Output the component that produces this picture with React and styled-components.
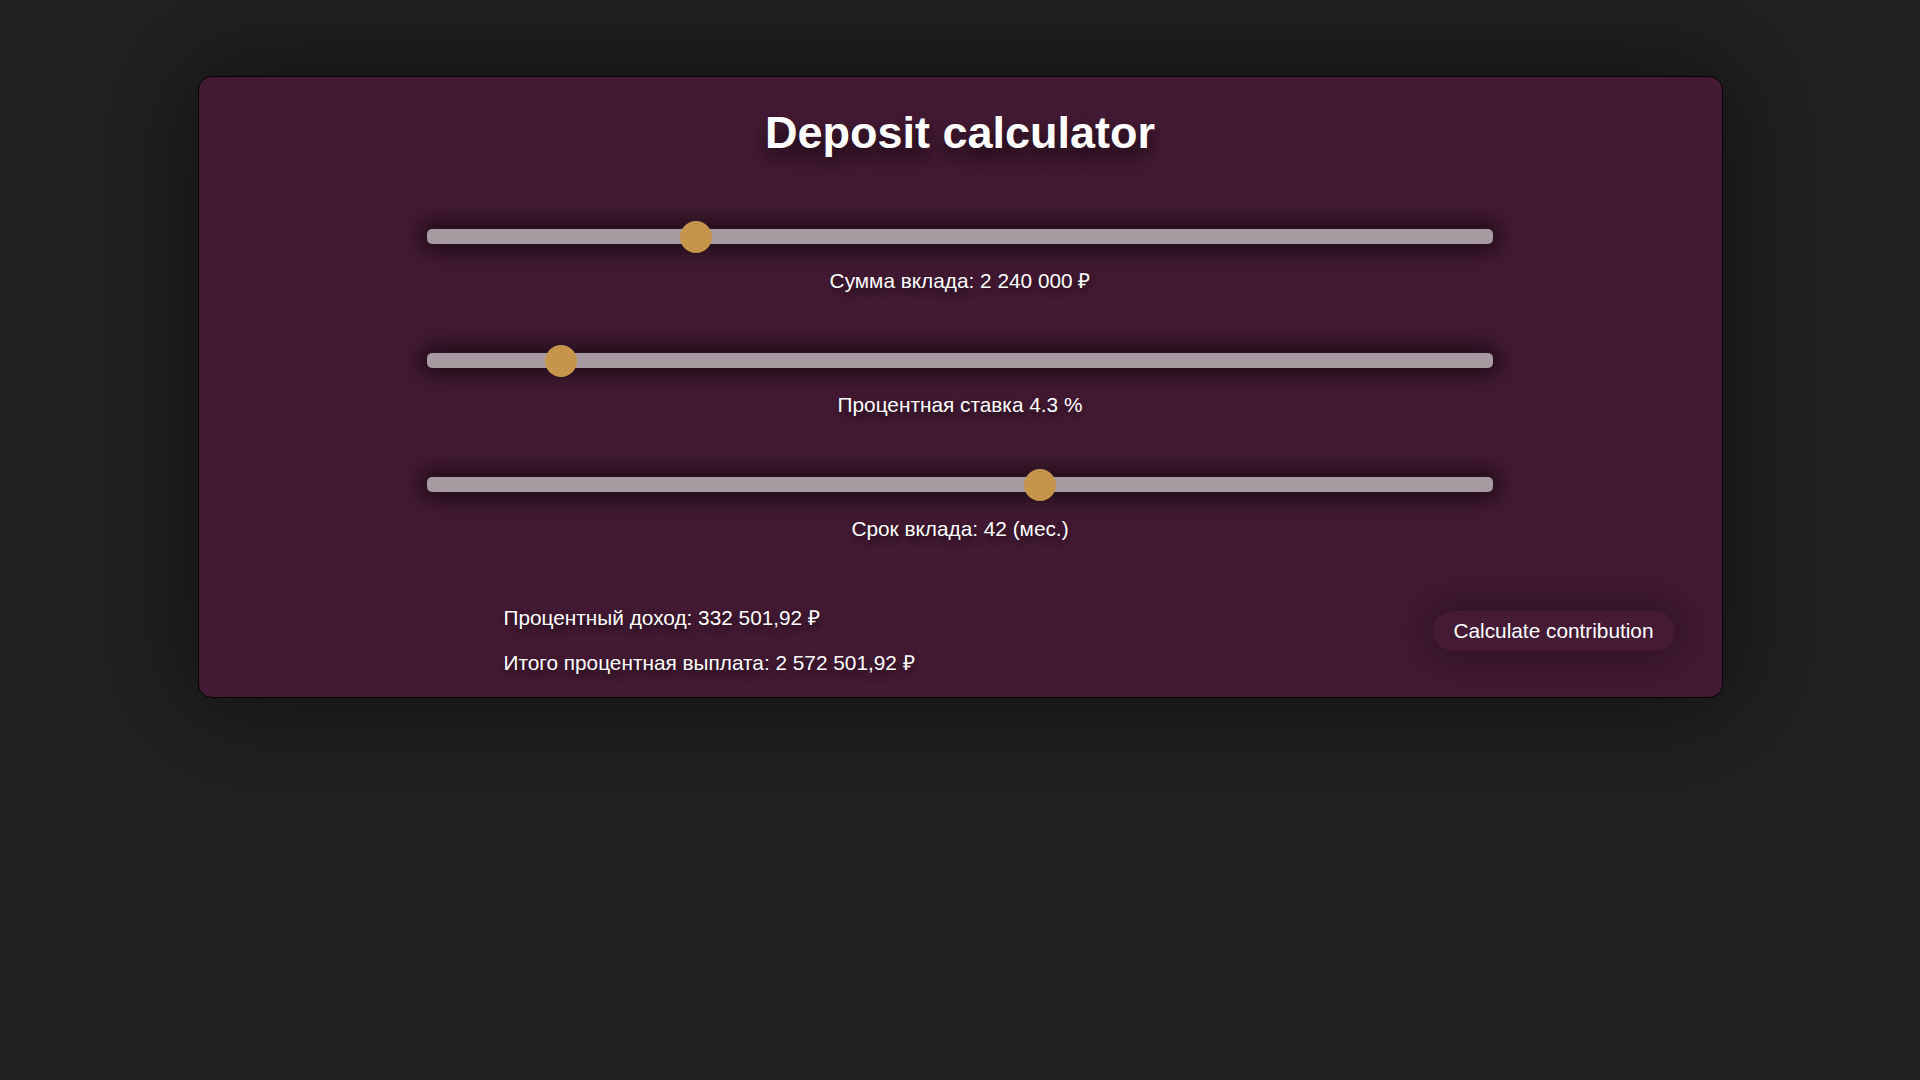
import React, { useState } from 'react'
import styled, { createGlobalStyle } from 'styled-components'

const GlobalStyle = createGlobalStyle`
    html, body {
        margin: 0;
        padding: 0;
        background: #222222;
        font-family: "Liberation Sans", Arial, sans-serif;
    }
`

const sliders = [
    { key: 'sum', min: 50000, max: 9000000, step: 10000, value: 2240000, label: (v) => `Сумма вклада: ${v.toLocaleString('ru-RU').replace(/\u00a0/g, ' ')} ₽` },
    { key: 'rate', min: 1, max: 30, step: 0.1, value: 4.3, label: (v) => `Процентная ставка ${v} %` },
    { key: 'term', min: 1, max: 72, step: 1, value: 42, label: (v) => `Срок вклада: ${v} (мес.)` },
]

const App = () => {
    const [values, setValues] = useState(() => Object.fromEntries(sliders.map((s) => [s.key, s.value])))

    return (
        <Page>
            <GlobalStyle />
            <Card>
                <Title>Deposit calculator</Title>
                <Fields>
                    {sliders.map((s) => (
                        <Field key={s.key}>
                            <Range
                                type="range"
                                min={s.min}
                                max={s.max}
                                step={s.step}
                                value={values[s.key]}
                                onChange={(e) => setValues({ ...values, [s.key]: Number(e.target.value) })}
                            />
                            <Label>{s.label(values[s.key])}</Label>
                        </Field>
                    ))}
                </Fields>
                <Bottom>
                    <Results>
                        <ResultLine>Процентный доход: 332 501,92 ₽</ResultLine>
                        <ResultLine>Итого процентная выплата: 2 572 501,92 ₽</ResultLine>
                    </Results>
                    <CalcButton>Calculate contribution</CalcButton>
                </Bottom>
            </Card>
        </Page>
    )
}

const Page = styled.div`
    min-height: 100vh;
    box-sizing: border-box;
    padding-top: 76px;
`
const Card = styled.section`
    box-sizing: border-box;
    width: 1525px;
    margin: 0 auto;
    padding: 30px 0 23px;
    background: #431a33;
    border: 1px solid #050505;
    border-radius: 14px;
    box-shadow: 0 0 110px 20px rgba(0, 0, 0, 0.45);
    display: flex;
    flex-direction: column;
    align-items: center;
`
const Title = styled.h1`
    margin: 0;
    font-size: 45px;
    line-height: 52px;
    font-weight: bold;
    color: #ffffff;
    text-shadow: 0 10px 18px rgba(0, 0, 0, 0.75);
`
const Fields = styled.div`
    width: 100%;
    margin-top: 70px;
    display: flex;
    flex-direction: column;
    align-items: center;
    gap: 61px;
`
const Field = styled.div`
    width: 70%;
    display: flex;
    flex-direction: column;
    align-items: center;
`
const Range = styled.input`
    -webkit-appearance: none;
    appearance: none;
    display: block;
    width: 100%;
    height: 15px;
    margin: 0;
    background: #a89aa1;
    border-radius: 5px;
    outline: none;
    box-shadow: 0 0 22px 8px rgba(0, 0, 0, 0.55);
    cursor: pointer;
    &::-webkit-slider-thumb {
        -webkit-appearance: none;
        appearance: none;
        width: 32px;
        height: 32px;
        border-radius: 50%;
        background: #c4954a;
        border: none;
    }
    &::-moz-range-thumb {
        width: 32px;
        height: 32px;
        border-radius: 50%;
        background: #c4954a;
        border: none;
    }
`
const Label = styled.div`
    margin-top: 25px;
    font-size: 20.8px;
    line-height: 23px;
    color: #ffffff;
    text-shadow: 1px 4px 8px rgba(0, 0, 0, 0.65);
`
const Bottom = styled.div`
    box-sizing: border-box;
    width: 100%;
    margin-top: 66px;
    padding: 0 47px 0 305px;
    display: flex;
    justify-content: space-between;
    align-items: flex-start;
`
const Results = styled.div`
    display: flex;
    flex-direction: column;
    gap: 22px;
`
const ResultLine = styled.div`
    font-size: 20.8px;
    line-height: 23px;
    color: #ffffff;
    text-shadow: 1px 4px 8px rgba(0, 0, 0, 0.65);
`
const CalcButton = styled.button`
    margin-top: 5px;
    height: 40px;
    padding: 0 21px;
    border: none;
    border-radius: 20px;
    background: #441a34;
    color: #ffffff;
    font-family: "Liberation Sans", Arial, sans-serif;
    font-size: 20.8px;
    box-shadow: 0 0 40px 12px rgba(0, 0, 0, 0.3);
    cursor: pointer;
`

export default App
